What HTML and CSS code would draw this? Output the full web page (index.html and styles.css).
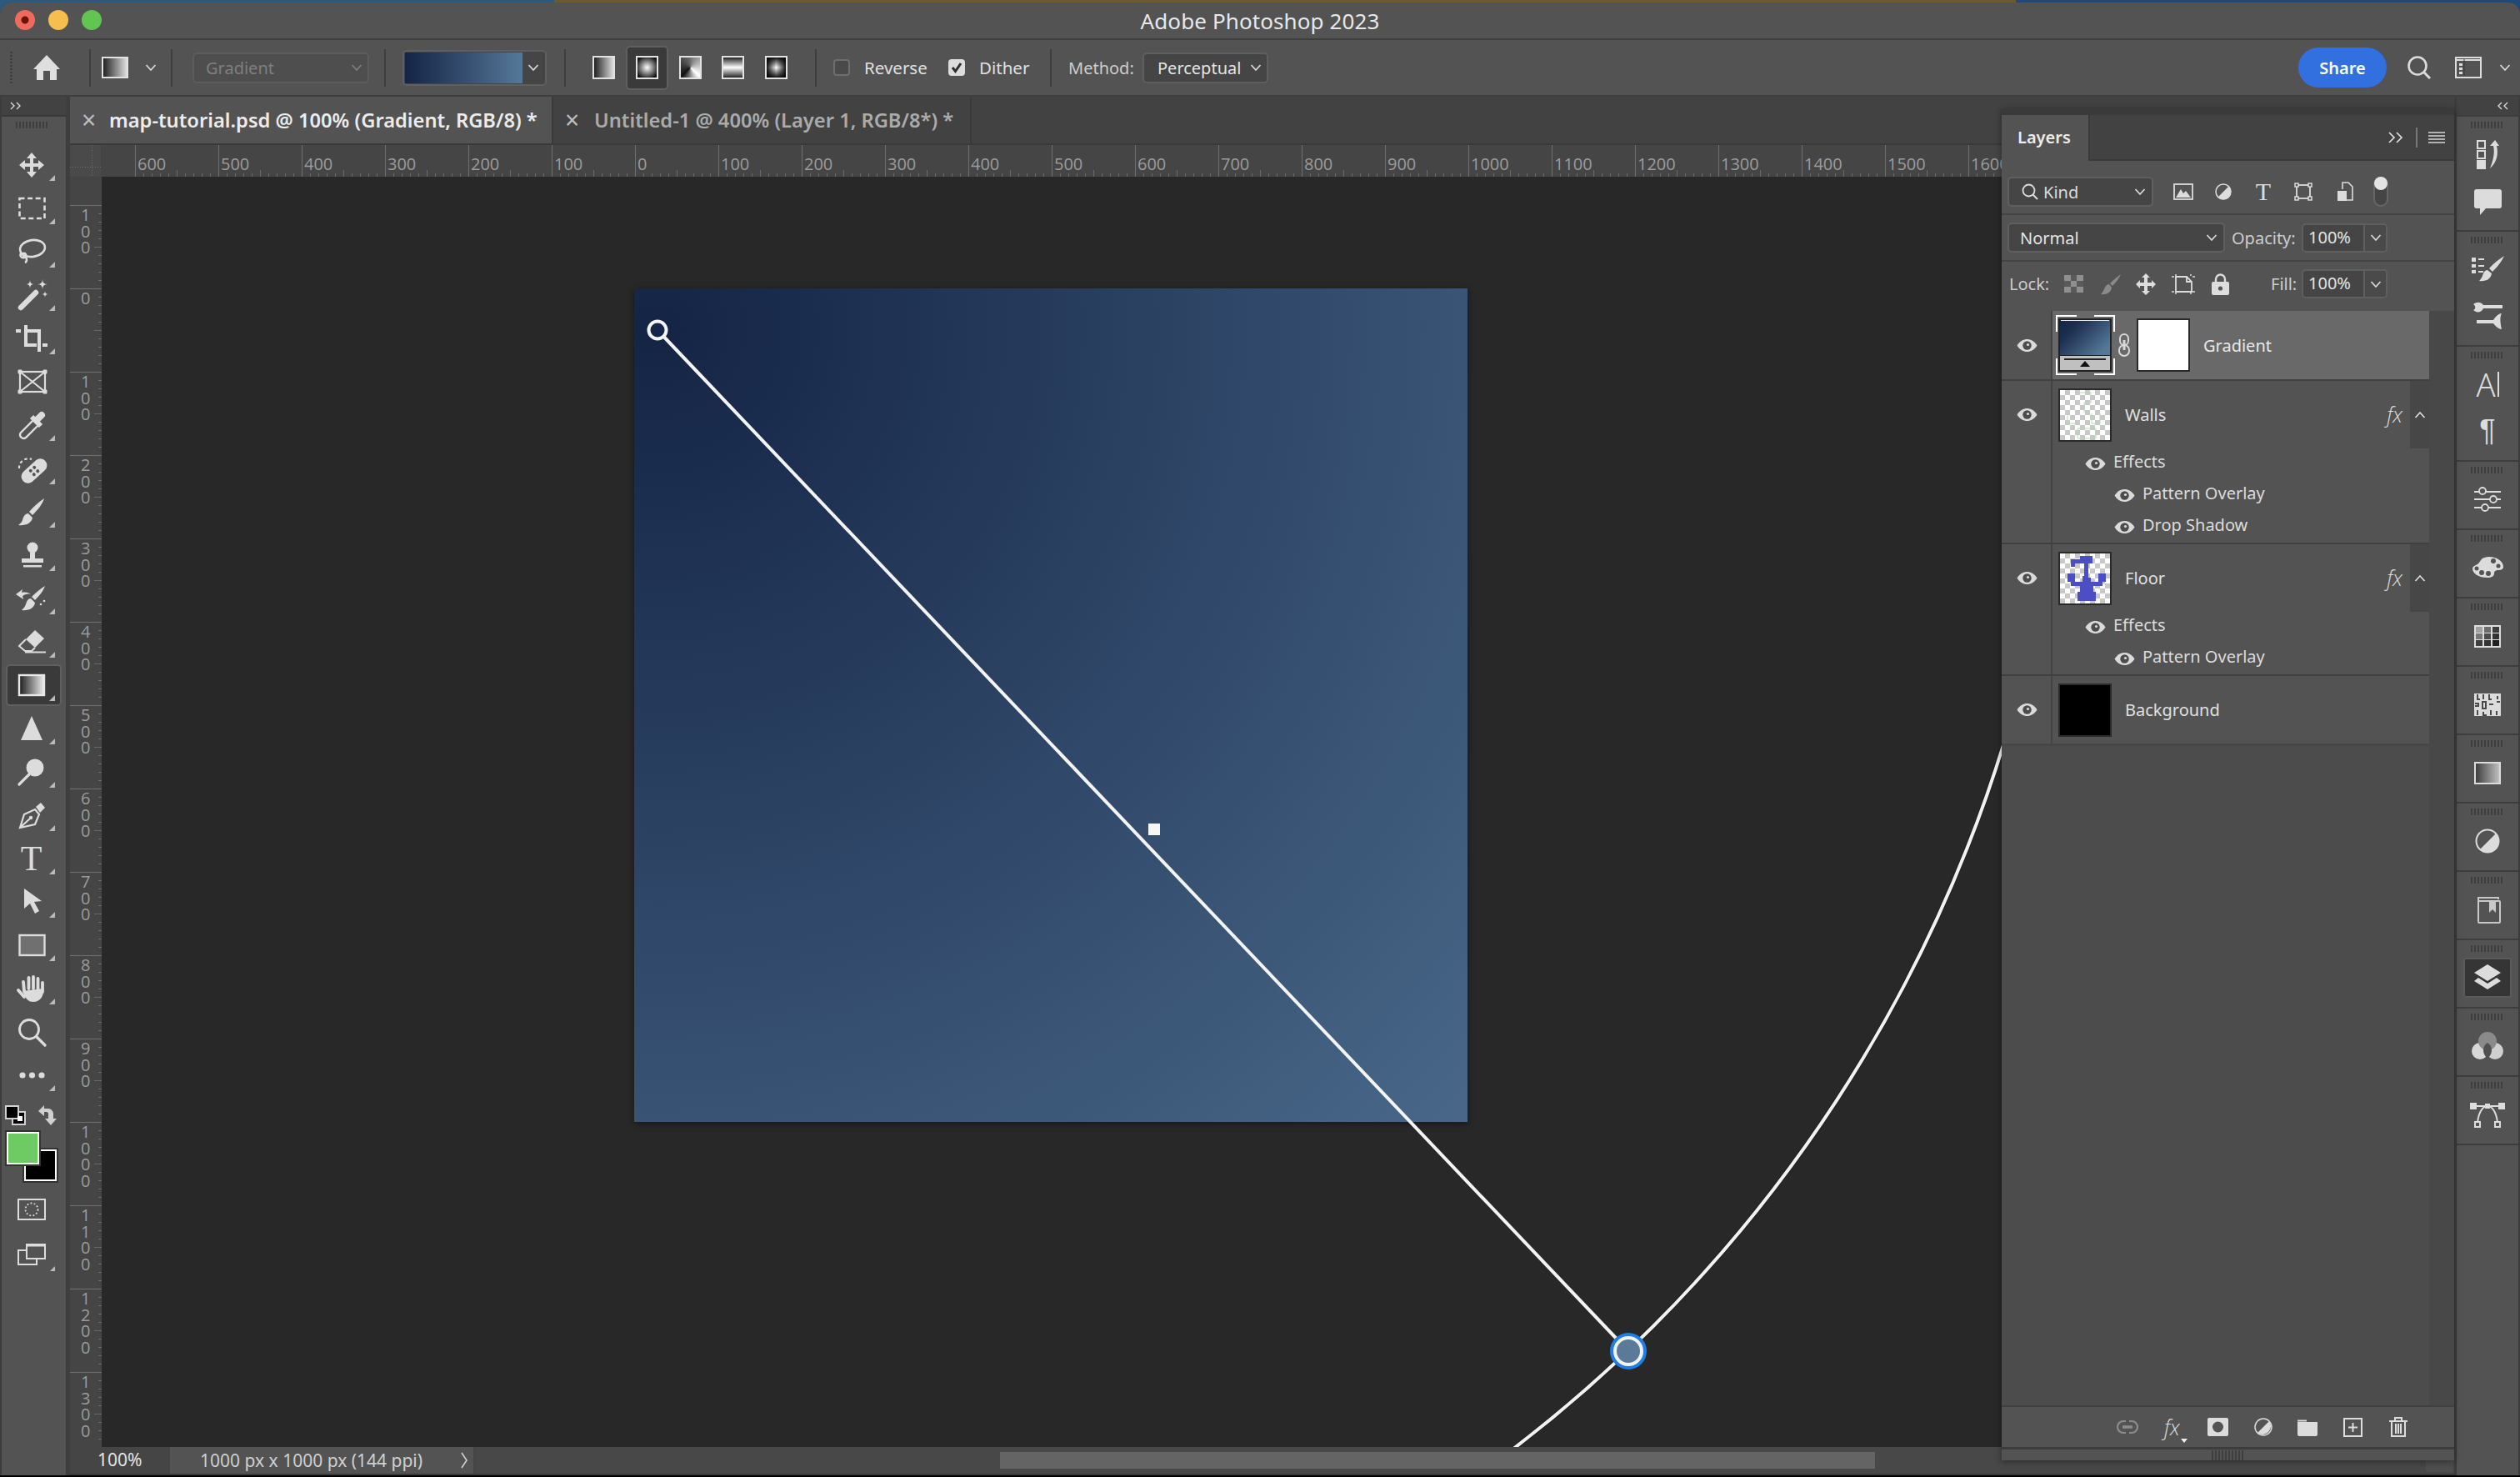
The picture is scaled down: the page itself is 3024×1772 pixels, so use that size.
FILE: index.html
```html
<!DOCTYPE html>
<html lang="en">
<head>
<meta charset="utf-8">
<title>Adobe Photoshop 2023</title>
<link rel="stylesheet" href="styles.css">
</head>
<body>
<svg class="defs" width="0" height="0" aria-hidden="true">
  <defs>
    <linearGradient id="gBW"><stop offset="0" stop-color="#1c1c1c"/><stop offset="1" stop-color="#eeeeee"/></linearGradient>
    <linearGradient id="gGrey"><stop offset="0" stop-color="#3a3a3a"/><stop offset="1" stop-color="#c4c4c4"/></linearGradient>
    <linearGradient id="gThumb" x1="0" y1="0" x2="1" y2="0.7"><stop offset="0" stop-color="#142445"/><stop offset="0.3" stop-color="#1d3050"/><stop offset="1" stop-color="#557899"/></linearGradient>
    <symbol id="eye" viewBox="0 0 25 17"><path fill="#dadada" d="M.5 8.5C4 3 8 1 12.5 1S21 3 24.5 8.5C21 14 17 16 12.5 16S4 14 .5 8.5Z"/><circle cx="12.5" cy="8.5" r="5.2" fill="#4c4c4c"/><circle cx="13.5" cy="7.5" r="1.6" fill="#dadada"/></symbol>
    <symbol id="chev" viewBox="0 0 14 10"><path d="M1.5 2 7 8l5.5-6" fill="none" stroke="#d8d8d8" stroke-width="1.8"/></symbol>
    <symbol id="caret" viewBox="0 0 14 10"><path d="M1.5 8 7 2l5.5 6" fill="none" stroke="#d8d8d8" stroke-width="1.8"/></symbol>
  </defs>
</svg>
<div class="window">
  <header class="titlebar">
    <div class="lights"><i class="light red"></i><i class="light yellow"></i><i class="light green"></i></div>
    <div class="apptitle">Adobe Photoshop 2023</div>
  </header>

  <div class="options">
    <i class="opt-grip"></i>
    <svg class="opt-home" width="32" height="30" viewBox="0 0 32 30"><path fill="#dedede" d="M16 0 32 17h-4v13h-8V19h-8v11H4V17H0Z"/></svg>
    <i class="sep sep-a"></i>
    <span class="swatch-tool gt gt-linear"></span>
    <svg class="chev-a" width="14" height="10"><use href="#chev"/></svg>
    <i class="sep sep-b"></i>
    <div class="select select-disabled"><span>Gradient</span><svg width="14" height="10"><use href="#chev" opacity=".35"/></svg></div>
    <i class="sep sep-c"></i>
    <div class="picker"><span class="picker-grad"></span><span class="picker-arrow"><svg width="14" height="10"><use href="#chev"/></svg></span></div>
    <i class="sep sep-d"></i>
    <span class="gt gt-linear gt-first"></span>
    <span class="gt-selected"><span class="gt gt-radial"></span></span>
    <span class="gt gt-angle gt-third"></span>
    <span class="gt gt-reflected gt-next"></span>
    <span class="gt gt-diamond gt-next"></span>
    <i class="sep sep-e"></i>
    <span class="check check-rev"></span>
    <span class="optlabel lbl-rev">Reverse</span>
    <span class="check check-on check-dit"><svg width="14" height="14" viewBox="0 0 14 14"><path d="M2 7l3.5 4.5L12 2" fill="none" stroke="#2e2e2e" stroke-width="3"/></svg></span>
    <span class="optlabel lbl-dit">Dither</span>
    <i class="sep sep-f"></i>
    <span class="optlabel lbl-met">Method:</span>
    <div class="select select-method"><span>Perceptual</span><svg width="14" height="10"><use href="#chev"/></svg></div>
    <button class="share">Share</button>
    <svg class="opt-search" width="28" height="28" viewBox="0 0 28 28"><circle cx="12" cy="12" r="10.5" fill="none" stroke="#dcdcdc" stroke-width="2.6"/><path d="M19.5 19.5 27 27" stroke="#dcdcdc" stroke-width="3"/></svg>
    <svg class="opt-work" width="32" height="26" viewBox="0 0 32 26"><rect x="1" y="1" width="30" height="24" fill="none" stroke="#dcdcdc" stroke-width="2"/><path d="M1 4h30" stroke="#dcdcdc" stroke-width="2"/><path d="M11 3v20" stroke="#3c3c3c" stroke-width="1"/><rect x="5" y="8" width="4" height="3" fill="#dcdcdc"/><rect x="5" y="13" width="4" height="3" fill="#dcdcdc"/><rect x="5" y="18" width="4" height="3" fill="#dcdcdc"/></svg>
    <svg class="opt-chev" width="14" height="10"><use href="#chev"/></svg>
  </div>

  <div class="work">
    <aside class="toolbar">
      <div class="collapse-strip"><svg width="14" height="10" viewBox="0 0 14 10"><path d="M1 1l4 4-4 4M8 1l4 4-4 4" fill="none" stroke="#d8d8d8" stroke-width="1.4"/></svg></div>
      <i class="grip grip-tools"></i>
      <div class="tools">
        <div class="tool more"><svg viewBox="0 0 48 48"><path d="M24 9l-6 7h4v6h-6v-4l-7 6 7 6v-4h6v6h-4l6 7 6-7h-4v-6h6v4l7-6-7-6v4h-6v-6h4z"/></svg></div>
        <div class="tool more"><svg viewBox="0 0 48 48"><rect x="9.5" y="12" width="30" height="24" fill="none" stroke="#dcdcdc" stroke-width="2.6" stroke-dasharray="6 3.6"/></svg></div>
        <div class="tool more"><svg viewBox="0 0 48 48"><g fill="none" stroke="#dcdcdc" stroke-width="2.6"><ellipse cx="25" cy="20" rx="15" ry="10" transform="rotate(-8 25 20)"/><path d="M12 25c-3 3-1 7 3 6 4-1 2-6-1-5-2 1 1 4 3 5 2 2 1 5-1 6"/></g></svg></div>
        <div class="tool more"><svg viewBox="0 0 48 48"><path d="M11 39 29 21" stroke="#dcdcdc" stroke-width="6.5" stroke-linecap="round"/><path d="M23 6q0 5 5 5-5 0-5 5 0-5-5-5 5 0 5-5ZM38 5q0 6 6 6-6 0-6 6 0-6-6-6 6 0 6-6ZM41 19q0 4 4 4-4 0-4 4 0-4-4-4 4 0 4-4Z" transform="translate(-1 0)"/></svg></div>
        <div class="tool more"><svg viewBox="0 0 48 48"><path d="M17 8v24h13M17 15h16v25M5 15h6M37 32h6" fill="none" stroke="#dcdcdc" stroke-width="4"/></svg></div>
        <div class="tool"><svg viewBox="0 0 48 48"><g fill="none" stroke="#dcdcdc" stroke-width="2.2"><rect x="10" y="12" width="30" height="24"/><path d="M10 12l30 24M40 12 10 36"/></g><path d="M8 10h4v4H8zM38 10h4v4h-4zM8 34h4v4H8zM38 34h4v4h-4z" stroke="#dcdcdc"/></svg></div>
        <div class="tool more"><svg viewBox="0 0 48 48"><path d="M11 33 26 18l6 6-15 15c-4 3-9-2-6-6Z" fill="none" stroke="#dcdcdc" stroke-width="2.4"/><path d="M24 14l11 11" stroke="#dcdcdc" stroke-width="6"/><path d="M30 18l6-6" stroke="#dcdcdc" stroke-width="8" stroke-linecap="round"/></svg></div>
        <div class="tool more"><svg viewBox="0 0 48 48"><path d="M9 24a11 11 0 0 1 15-11" fill="none" stroke="#dcdcdc" stroke-width="2.2" stroke-dasharray="3.5 3"/><g transform="rotate(-42 27 27)"><rect x="9" y="19" width="36" height="16" rx="8"/><g fill="#535353"><circle cx="24" cy="24" r="2"/><circle cx="30" cy="24" r="2"/><circle cx="24" cy="30" r="2"/><circle cx="30" cy="30" r="2"/></g></g></svg></div>
        <div class="tool more"><svg viewBox="0 0 48 48"><path d="M39 8C37 15 31 22 25 28l-4-4C26 18 33 12 39 8ZM20 26c-4 0-6 4-7 8-1 3-3 4-5 6 8 1 16-2 17-9Z"/></svg></div>
        <div class="tool more"><svg viewBox="0 0 48 48"><circle cx="25" cy="15" r="6.5"/><path d="M22 20h6v8h-6zM12 28h26v5H12zM14 36h22v2.4H14z"/></svg></div>
        <div class="tool more"><svg viewBox="0 0 48 48"><path d="M40 9C38 15 33 21 28 26l-4-4C29 17 35 12 40 9ZM23 24c-4 0-5 4-6 7-1 3-3 5-5 7 8 1 15-2 16-9Z"/><path d="M5 19l8-6-1 4c5-1 9 0 11 2-4-1-7 0-10 2l1 4Z"/><circle cx="35" cy="31" r="1.3"/><circle cx="39" cy="27" r="1.3"/></svg></div>
        <div class="tool more"><svg viewBox="0 0 48 48"><path d="M28 10 39 20 28 31 17 21Z"/><path d="M17 21 9 29l7 6h8l4-4" fill="none" stroke="#dcdcdc" stroke-width="2"/><path d="M16 36.500h25" stroke="#dcdcdc" stroke-width="2"/></svg></div>
        <div class="tool more tool-active"><svg viewBox="0 0 48 48"><rect x="9" y="12" width="30" height="24" fill="url(#gBW)" stroke="#e8e8e8" stroke-width="2.4"/></svg></div>
        <div class="tool more"><svg viewBox="0 0 48 48"><path d="M24 9 37 38H11Z"/></svg></div>
        <div class="tool more"><svg viewBox="0 0 48 48"><circle cx="28" cy="19" r="10.500"/><path d="M9 39 21 27" stroke="#dcdcdc" stroke-width="3.200" stroke-linecap="round"/></svg></div>
        <div class="tool more"><svg viewBox="0 0 48 48"><path d="M10 39 15 23 28 17 33 23 28 35Z M10 39 22 28" fill="none" stroke="#dcdcdc" stroke-width="2.2"/><circle cx="23" cy="27" r="2.200"/><path d="M29 14 35 9 40 15 34 21Z"/></svg></div>
        <div class="tool more"><span class="tool-t">T</span></div>
        <div class="tool more"><svg viewBox="0 0 48 48"><path d="M15 8v24l7-6 6 12 5-3-6-11 9-1Z"/></svg></div>
        <div class="tool more"><svg viewBox="0 0 48 48"><rect x="9.500" y="12" width="30" height="24" fill="#707070" stroke="#dcdcdc" stroke-width="2.400"/></svg></div>
        <div class="tool more"><svg viewBox="0 0 48 48"><path d="M8 26l7 8M15 27l-1-11M20.500 24V11M26 24V10M31.500 25V12M37 28V17" stroke="#dcdcdc" stroke-width="3.800" stroke-linecap="round"/><path d="M13 27 38 24c1 9-4 16-12 16-6 0-9-3-13-13Z"/></svg></div>
        <div class="tool"><svg viewBox="0 0 48 48"><circle cx="21" cy="21" r="11.500" fill="none" stroke="#dcdcdc" stroke-width="2.800"/><path d="M29.500 29.500 40 40" stroke="#dcdcdc" stroke-width="3.400" stroke-linecap="round"/></svg></div>
        <div class="tool more"><svg viewBox="0 0 48 48"><circle cx="13" cy="24" r="3.600"/><circle cx="24.500" cy="24" r="3.600"/><circle cx="36" cy="24" r="3.600"/></svg></div>
      </div>
      <div class="colors">
        <svg class="color-default" width="25" height="24" viewBox="0 0 25 24"><rect x="9" y="8" width="15" height="15" fill="#000" stroke="#d0d0d0" stroke-width="2"/><rect x="1" y="1" width="15" height="15" fill="#000" stroke="#d0d0d0" stroke-width="2"/><rect x="15" y="13" width="6" height="6" fill="#fff"/></svg>
        <svg class="color-swap" width="24" height="24" viewBox="0 0 24 24"><path d="M0 7l7-7v4h5c3 0 6 3 6 6v6h4l-7 8-7-8h4v-6c0-1-1-2-2-2H7v5Z" fill="#d0d0d0"/></svg>
        <span class="color-bg"></span>
        <span class="color-fg"></span>
      </div>
      <svg class="quickmask" width="34" height="26" viewBox="0 0 34 26"><rect x="1" y="1" width="32" height="24" fill="none" stroke="#dcdcdc" stroke-width="2"/><circle cx="17" cy="13" r="7.500" fill="none" stroke="#dcdcdc" stroke-width="1.800" stroke-dasharray="1.800 2.400"/></svg>
      <div class="tool-screen"><svg width="34" height="26" viewBox="0 0 34 26"><rect x="1" y="8" width="22" height="17" fill="none" stroke="#dcdcdc" stroke-width="2"/><rect x="11" y="1" width="22" height="17" fill="#535353" stroke="#dcdcdc" stroke-width="2"/><path d="M11 2h22" stroke="#dcdcdc" stroke-width="3"/></svg></div>
    </aside>

    <main class="doc">
      <nav class="tabs">
        <div class="tab tab-active"><span class="tab-x">×</span><span class="tab-name">map-tutorial.psd @ 100% (Gradient, RGB/8) *</span></div>
        <div class="tab tab-idle"><span class="tab-x">×</span><span class="tab-name">Untitled-1 @ 400% (Layer 1, RGB/8*) *</span></div>
      </nav>
      <div class="hruler-row">
        <div class="ruler-corner"></div>
        <div class="hruler">
          <span>600</span><span>500</span><span>400</span><span>300</span><span>200</span><span>100</span><span>0</span><span>100</span><span>200</span><span>300</span><span>400</span><span>500</span><span>600</span><span>700</span><span>800</span><span>900</span><span>1000</span><span>1100</span><span>1200</span><span>1300</span><span>1400</span><span>1500</span><span>1600</span>
        </div>
      </div>
      <div class="doc-body">
        <div class="vruler">
          <div><span>100</span></div><div><span>0</span></div><div><span>100</span></div><div><span>200</span></div><div><span>300</span></div><div><span>400</span></div><div><span>500</span></div><div><span>600</span></div><div><span>700</span></div><div><span>800</span></div><div><span>900</span></div><div><span>1000</span></div><div><span>1100</span></div><div><span>1200</span></div><div><span>1300</span></div>
        </div>
        <div class="pasteboard">
          <div class="artboard"></div>
          <svg class="gizmo" width="2823" height="1524" viewBox="0 0 2823 1524">
            <g fill="none">
              <circle cx="667" cy="184" r="1690" stroke="#1a1a1a" stroke-opacity=".5" stroke-width="6"/>
              <circle cx="667" cy="184" r="1690" stroke="#f2f2f2" stroke-width="4"/>
              <path d="M667 184 1832 1409" stroke="#f4f4f4" stroke-width="4"/>
            </g>
            <circle cx="667" cy="184" r="10.500" fill="#15264a" stroke="#f4f4f4" stroke-width="4"/>
            <rect x="1256" y="776" width="14" height="14" fill="#f6f6f6"/>
            <circle cx="1832" cy="1409" r="22" fill="#1f7fe6"/>
            <circle cx="1832" cy="1409" r="16" fill="#5b7a97" stroke="#f2f2f2" stroke-width="4"/>
          </svg>
        </div>
      </div>
      <footer class="status">
        <div class="status-zoom">100%</div>
        <div class="status-info"><span>1000 px x 1000 px (144 ppi)</span><svg width="10" height="20" viewBox="0 0 10 20"><path d="M2 1l6 9-6 9" fill="none" stroke="#d0d0d0" stroke-width="1.600"/></svg></div>
        <div class="status-track"><span class="status-thumb"></span><span class="status-end"></span></div>
      </footer>
    </main>

    <aside class="dock">
      <div class="collapse-strip dock-strip"><svg width="14" height="10" viewBox="0 0 14 10"><path d="M5 1 1 5l4 4M12 1 8 5l4 4" fill="none" stroke="#d8d8d8" stroke-width="1.400"/></svg></div>
      <section class="dock-sec">
        <i class="grip"></i>
        <div class="dock-icon"><svg viewBox="0 0 48 48"><rect x="12" y="8" width="9" height="9" fill="none" stroke="#dcdcdc" stroke-width="2"/><rect x="12" y="20" width="9" height="9" fill="none" stroke="#dcdcdc" stroke-width="2"/><rect x="11" y="31" width="11" height="11"/><path d="M27 14 33 7 38 14H35C37 23 36 33 27 41 31 31 33 22 31 14Z"/></svg></div>
        <div class="dock-icon"><svg viewBox="0 0 48 48"><path d="M11 10h27a3 3 0 0 1 3 3v17a3 3 0 0 1-3 3H22l-7 8v-8h-4a3 3 0 0 1-3-3V13a3 3 0 0 1 3-3Z"/></svg></div>
      </section>
      <section class="dock-sec">
        <i class="grip"></i>
        <div class="dock-icon"><svg viewBox="0 0 48 48"><path d="M5 10h5v5H5zM5 18h5v4H5zM5 25h5v4H5zM13 11h7v2h-7zM13 19h7v2h-7zM13 26h6v2h-6z"/><path d="M44 8c-3 7-9 14-14 19l-4-4c5-6 12-11 18-15ZM24 25c-4 0-5 4-6 7-1 2-2 4-4 6 8 1 14-2 15-9Z"/></svg></div>
        <div class="dock-icon"><svg viewBox="0 0 48 48"><path d="M7 10c4-3 9-3 12 1h23v4H19c-2 5-8 6-12 2 3-1 3-5 0-7ZM41 40c-3 0-7-3-10-7H11v-4h20c3-5 7-8 10-8-3 5-1 14 0 19Z"/></svg></div>
      </section>
      <section class="dock-sec">
        <i class="grip"></i>
        <div class="dock-icon dock-text"><span class="dock-a">A</span><i class="dock-caret"></i></div>
        <div class="dock-icon dock-text"><span class="dock-p">¶</span></div>
      </section>
      <section class="dock-sec dock-one"><i class="grip"></i><div class="dock-icon"><svg viewBox="0 0 48 48"><g fill="none" stroke="#dcdcdc" stroke-width="1.800"><path d="M8 15h32M8 24h32M8 34h32"/><g fill="#535353"><circle cx="18" cy="14" r="4"/><circle cx="31" cy="24" r="4"/><circle cx="21" cy="34" r="4"/></g></g></svg></div></section>
      <section class="dock-sec dock-one"><i class="grip"></i><div class="dock-icon"><svg viewBox="0 0 48 48"><path d="M26 11c9 0 17 5 17 12 0 3-3 4-6 4-3 0-5 1-5 4 0 3-3 5-8 5C13 36 6 31 6 25c0-2 2-3 4-4 3-1 4-3 6-6 2-3 6-4 10-4Z"/><g fill="#535353"><circle cx="31" cy="16" r="3"/><circle cx="37" cy="22" r="2.500"/><circle cx="25" cy="31" r="3"/><circle cx="17" cy="30" r="3"/><circle cx="11" cy="25" r="2.500"/></g></svg></div></section>
      <section class="dock-sec dock-one"><i class="grip"></i><div class="dock-icon"><svg viewBox="0 0 48 48"><rect x="8" y="11" width="32" height="27" fill="#dcdcdc"/><g><rect x="10" y="13" width="8" height="7" fill="#a0a0a0"/><rect x="20" y="13" width="8" height="7" fill="#6c6c6c"/><rect x="30" y="13" width="8" height="7" fill="#3c3c3c"/><rect x="10" y="21" width="8" height="7" fill="#777"/><rect x="20" y="21" width="8" height="7" fill="#4c4c4c"/><rect x="30" y="21" width="8" height="7" fill="#333"/><rect x="10" y="29" width="8" height="7" fill="#3e3e3e"/><rect x="20" y="29" width="8" height="7" fill="#333"/><rect x="30" y="29" width="8" height="7" fill="#222"/></g></svg></div></section>
      <section class="dock-sec dock-one"><i class="grip"></i><div class="dock-icon"><svg viewBox="0 0 48 48"><rect x="8" y="11" width="32" height="27" fill="#dcdcdc"/><path d="M12 12v6h3M19 12v6M26 12v6h3M36 14v4M9 23h4v3H9M18 21h4v8h-4zM26 24h5M35 21h4M12 31v6M19 33v4h4M28 31v6M35 32v5" fill="none" stroke="#4a4a4a" stroke-width="2"/></svg></div></section>
      <section class="dock-sec dock-one"><i class="grip"></i><div class="dock-icon"><svg viewBox="0 0 48 48"><rect x="9" y="12" width="30" height="25" fill="url(#gGrey)" stroke="#dcdcdc" stroke-width="2"/></svg></div></section>
      <section class="dock-sec dock-one"><i class="grip"></i><div class="dock-icon"><svg viewBox="0 0 48 48"><circle cx="24" cy="24" r="13.500" fill="#535353" stroke="#dcdcdc" stroke-width="2"/><path d="M34 15A13 13 0 0 1 15 34Z"/></svg></div></section>
      <section class="dock-sec dock-one"><i class="grip"></i><div class="dock-icon"><svg viewBox="0 0 48 48"><path d="M13 33V10h24v2" fill="none" stroke="#c8c8c8" stroke-width="2"/><rect x="13" y="14" width="26" height="26" rx="1" fill="#535353" stroke="#c8c8c8" stroke-width="2"/><path d="M26 13h8v15l-4-4-4 4Z" fill="#c8c8c8"/></svg></div></section>
      <section class="dock-sec dock-one"><i class="grip"></i><div class="dock-icon dock-active"><svg viewBox="0 0 48 48"><path d="M24 8 40 18 24 28 8 18Z"/><path d="M13 24 8 28 24 38 40 28 35 24 24 31Z"/></svg></div></section>
      <section class="dock-sec dock-one"><i class="grip"></i><div class="dock-icon"><svg viewBox="0 0 48 48"><circle cx="15" cy="30" r="10" fill="#d8d8d8"/><circle cx="33" cy="30" r="10" fill="#d0d0d0"/><circle cx="24" cy="18" r="11" fill="#8a8a8a"/><path d="M24 20a11 11 0 0 1 5 9c0 4-2 7-5 10-3-3-5-6-5-10a11 11 0 0 1 5-9Z" fill="#505050"/></svg></div></section>
      <section class="dock-sec dock-one"><i class="grip"></i><div class="dock-icon"><svg viewBox="0 0 48 48"><path d="M12 37C12 25 17 14 24 14S36 25 36 37M8 14h32" fill="none" stroke="#dcdcdc" stroke-width="2"/><path d="M3 10h8v8H3zM37 10h8v8h-8zM21 11h6v6h-6z"/><rect x="9" y="33" width="6" height="6" fill="#535353" stroke="#dcdcdc" stroke-width="2"/><rect x="33" y="33" width="6" height="6" fill="#535353" stroke="#dcdcdc" stroke-width="2"/></svg></div></section>
      <section class="dock-sec dock-rest"></section>
    </aside>

    <section class="panel">
      <div class="panel-head">
        <div class="panel-tab">Layers</div>
        <svg class="ph-more" width="18" height="14" viewBox="0 0 18 14"><path d="M1 1l6 6-6 6M10 1l6 6-6 6" fill="none" stroke="#e0e0e0" stroke-width="1.700"/></svg>
        <i class="ph-sep"></i>
        <svg class="ph-menu" width="20" height="14" viewBox="0 0 20 14"><path d="M0 1h20M0 5h20M0 9h20M0 13h20" stroke="#d8d8d8" stroke-width="1.500"/></svg>
      </div>

      <div class="filter-row prow">
        <div class="select select-kind">
          <svg width="20" height="20" viewBox="0 0 20 20"><circle cx="8.500" cy="8.500" r="7" fill="none" stroke="#dcdcdc" stroke-width="1.800"/><path d="M13.500 13.500 19 19" stroke="#dcdcdc" stroke-width="2"/></svg>
          <span>Kind</span><svg class="sel-chev" width="14" height="10"><use href="#chev"/></svg>
        </div>
        <svg class="f-img" width="24" height="20" viewBox="0 0 24 20"><rect x="1" y="1" width="22" height="18" fill="none" stroke="#dcdcdc" stroke-width="1.800"/><path d="M3 17l6-10 3 5 3-3 6 8Z" fill="#dcdcdc"/></svg>
        <svg class="f-adj" width="20" height="20" viewBox="0 0 20 20"><circle cx="10" cy="10" r="9" fill="none" stroke="#dcdcdc" stroke-width="1.500"/><path d="M16.500 3.500A9 9 0 0 1 3.500 16.500Z" fill="#dcdcdc"/></svg>
        <span class="f-t">T</span>
        <svg class="f-shape" width="22" height="22" viewBox="0 0 22 22"><rect x="3" y="3" width="16" height="16" fill="none" stroke="#dcdcdc" stroke-width="1.800"/><g fill="#535353" stroke="#dcdcdc" stroke-width="1.500"><rect x="1" y="1" width="4" height="4"/><rect x="17" y="1" width="4" height="4"/><rect x="1" y="17" width="4" height="4"/><rect x="17" y="17" width="4" height="4"/></g></svg>
        <svg class="f-smart" width="20" height="24" viewBox="0 0 20 24"><path d="M7 9V1h7l5 5v16h-7" fill="none" stroke="#dcdcdc" stroke-width="1.600"/><rect x="1" y="11" width="11" height="12" fill="#dcdcdc"/></svg>
        <span class="f-toggle"><i></i></span>
      </div>

      <div class="blend-row prow">
        <div class="select select-blend"><span>Normal</span><svg width="14" height="10"><use href="#chev"/></svg></div>
        <span class="plabel p-opacity">Opacity:</span>
        <div class="pct"><span>100%</span><b><svg width="14" height="10"><use href="#chev"/></svg></b></div>
      </div>

      <div class="lock-row prow">
        <span class="plabel p-lock">Lock:</span>
        <svg class="l-check" width="23" height="21" viewBox="0 0 23 21"><rect width="23" height="21" fill="#8f8f8f"/><path d="M8 0h7v7H8zM0 7h8v7H0zM15 7h8v7h-8zM8 14h7v7H8z" fill="#5a5a5a"/></svg>
        <svg class="l-brush" width="25" height="26" viewBox="0 0 25 26"><path d="M24 1c-2 5-6 10-10 14l-3-3c4-4 9-8 13-11ZM10 13c-3 0-5 3-6 6-1 2-2 4-4 6 7 1 12-2 13-8Z" fill="#8a8a8a"/></svg>
        <svg class="l-move" width="24" height="26" viewBox="0 0 24 26"><path d="M12 0 7 5h3v6H5V8l-5 5 5 5v-3h5v6H7l5 5 5-5h-3v-6h5v3l5-5-5-5v3h-5V5h3Z" fill="#dcdcdc"/></svg>
        <svg class="l-art" width="28" height="24" viewBox="0 0 28 24"><path d="M5 3h13l6 6v12H5Z" fill="none" stroke="#dcdcdc" stroke-width="1.800"/><path d="M18 3v6h6" fill="none" stroke="#dcdcdc" stroke-width="1.800"/><path d="M0 3h3M25 3h3M0 21h3M25 21h3M5 0v2M5 22v2M23 0v2M23 22v2" stroke="#dcdcdc" stroke-width="1.500"/></svg>
        <svg class="l-lock" width="21" height="26" viewBox="0 0 21 26"><path d="M5 11V7a5.500 5.500 0 0 1 11 0v4" fill="none" stroke="#dcdcdc" stroke-width="2.400"/><rect y="10" width="21" height="16" rx="2" fill="#dcdcdc"/><circle cx="10.500" cy="18" r="2.600" fill="#535353"/></svg>
        <span class="plabel p-fill">Fill:</span>
        <div class="pct"><span>100%</span><b><svg width="14" height="10"><use href="#chev"/></svg></b></div>
      </div>

      <div class="panel-main">
        <div class="layers">
          <div class="layer layer-selected">
            <div class="eye-col"><svg class="eye" width="25" height="17"><use href="#eye"/></svg></div>
            <div class="layer-content">
              <div class="layer-head layer-head-sel">
                <svg class="thumb-grad" width="71" height="72" viewBox="0 0 71 72">
                  <rect x="3" y="4" width="64" height="64" fill="#222"/>
                  <rect x="5" y="6" width="60" height="42" fill="url(#gThumb)"/>
                  <path d="M6 6.500h58" stroke="#e6e6e6" stroke-width="1"/>
                  <rect x="5" y="49" width="60" height="17" fill="#c0c0c0"/>
                  <path d="M10 53h50" stroke="#222" stroke-width="2"/>
                  <path d="M35 55l6 7H29Z" fill="#111"/>
                  <path d="M1 20V1h24M46 1h24v19M1 52v19h24M46 71h24V52" fill="none" stroke="#fff" stroke-width="2"/>
                </svg>
                <svg class="chain" width="14" height="28" viewBox="0 0 14 28"><g fill="none" stroke="#d8d8d8" stroke-width="2"><rect x="2" y="1" width="10" height="13" rx="5"/><rect x="1" y="14" width="12" height="13" rx="6"/></g><path d="M7 8v12" stroke="#d8d8d8" stroke-width="3"/></svg>
                <span class="thumb thumb-mask"></span>
                <span class="lname lname-sel">Gradient</span>
              </div>
            </div>
          </div>

          <div class="layer">
            <div class="eye-col eye-col-group"><svg class="eye" width="25" height="17"><use href="#eye"/></svg></div>
            <div class="layer-content">
              <div class="layer-head">
                <span class="thumb thumb-check"><svg width="60" height="60" viewBox="0 0 60 60"><path d="M22 3h15v12H29v12M9 28v12h12M38 28v12H48V28M21 46h22v12H21z" fill="none" stroke="#b4d8b4" stroke-width="1"/></svg></span>
                <span class="lname">Walls</span>
                <span class="fx">fx</span>
                <span class="collapse"><svg width="14" height="10"><use href="#caret"/></svg></span>
              </div>
              <div class="fx-list">
                <div class="fx-row fx-group"><svg class="eye" width="25" height="17"><use href="#eye"/></svg><span>Effects</span></div>
                <div class="fx-row fx-item"><svg class="eye" width="25" height="17"><use href="#eye"/></svg><span>Pattern Overlay</span></div>
                <div class="fx-row fx-item"><svg class="eye" width="25" height="17"><use href="#eye"/></svg><span>Drop Shadow</span></div>
              </div>
            </div>
          </div>

          <div class="layer">
            <div class="eye-col eye-col-group"><svg class="eye" width="25" height="17"><use href="#eye"/></svg></div>
            <div class="layer-content">
              <div class="layer-head">
                <span class="thumb thumb-check"><svg width="60" height="60" viewBox="0 0 60 60"><g fill="#4c4ec6"><path d="M13 7h11V3h15v9h-5v17h3v5h9V24h9v10h-4v5H40v7h3v11H21V46h3v-7H13v-5h14v-7h2V12H18v4h-5Z"/><path d="M9 24h9v10H9z"/></g></svg></span>
                <span class="lname">Floor</span>
                <span class="fx">fx</span>
                <span class="collapse"><svg width="14" height="10"><use href="#caret"/></svg></span>
              </div>
              <div class="fx-list">
                <div class="fx-row fx-group"><svg class="eye" width="25" height="17"><use href="#eye"/></svg><span>Effects</span></div>
                <div class="fx-row fx-item"><svg class="eye" width="25" height="17"><use href="#eye"/></svg><span>Pattern Overlay</span></div>
              </div>
            </div>
          </div>

          <div class="layer layer-last">
            <div class="eye-col"><svg class="eye" width="25" height="17"><use href="#eye"/></svg></div>
            <div class="layer-content">
              <div class="layer-head">
                <span class="thumb thumb-black"></span>
                <span class="lname">Background</span>
              </div>
            </div>
          </div>
        </div>
        <div class="panel-scroll"></div>
      </div>

      <div class="panel-foot">
        <svg class="pf-link" width="28" height="18" viewBox="0 0 28 18"><g fill="none" stroke="#8c8c8c" stroke-width="2.200"><path d="M12 2H9a7 7 0 0 0 0 14h3M16 2h3a7 7 0 0 1 0 14h-3"/></g><path d="M8 9h12" stroke="#8c8c8c" stroke-width="3.500"/></svg>
        <span class="pf-fx">fx</span>
        <svg class="pf-mask" width="25" height="22" viewBox="0 0 25 22"><rect width="25" height="22" rx="2" fill="#dcdcdc"/><ellipse cx="12.500" cy="11" rx="6.500" ry="6.500" fill="#535353"/></svg>
        <svg class="pf-adj" width="22" height="22" viewBox="0 0 22 22"><circle cx="11" cy="11" r="10" fill="none" stroke="#dcdcdc" stroke-width="1.500"/><path d="M18 4A10 10 0 0 1 4 18Z" fill="#dcdcdc"/></svg>
        <svg class="pf-folder" width="24" height="21" viewBox="0 0 24 21"><path d="M0 4h24v15a2 2 0 0 1-2 2H2a2 2 0 0 1-2-2Z" fill="#dcdcdc"/><path d="M0 2.500h11" stroke="#dcdcdc" stroke-width="2"/></svg>
        <svg class="pf-new" width="23" height="23" viewBox="0 0 23 23"><rect x="1" y="1" width="21" height="21" fill="none" stroke="#dcdcdc" stroke-width="2"/><path d="M11.500 6v11M6 11.500h11" stroke="#dcdcdc" stroke-width="2"/></svg>
        <svg class="pf-trash" width="22" height="24" viewBox="0 0 22 24"><path d="M0 5h22M7 5V1h8v4" fill="none" stroke="#dcdcdc" stroke-width="2"/><path d="M3 5v18h16V5M8 8v12M11 8v12M14 8v12" fill="none" stroke="#dcdcdc" stroke-width="2"/></svg>
      </div>
      <div class="panel-grip"><i class="grip grip-bottom"></i></div>
    </section>
  </div>
</div>
</body>
</html>
```
FILE: styles.css
```css
* { box-sizing: border-box; }
html, body { margin: 0; height: 100%; }
body {
  width: 3024px; height: 1772px; overflow: hidden;
  background: linear-gradient(90deg, #2c5a7e 0 22%, #6d5a2c 22% 80%, #1f4a78 80%) top / 100% 18px no-repeat, #000;
  font-family: "Noto Sans", "Open Sans", sans-serif;
  color: #dcdcdc;
  padding-top: 3px;
}
svg { display: block; flex: none; fill: #dcdcdc; }
.defs { position: absolute; }
i { display: block; font-style: normal; }

.window {
  position: relative; height: 1767px; display: flex; flex-direction: column;
  background: #3c3c3c; border-radius: 14px 14px 0 0; overflow: hidden;
}

/* title bar */
.titlebar {
  height: 45px; flex: none; background: #535353; border-bottom: 2px solid #3e3e3e;
  position: relative; display: flex; align-items: center; justify-content: center;
}
.lights { position: absolute; left: 18px; top: 9px; display: flex; gap: 16px; }
.light { width: 24px; height: 24px; border-radius: 50%; }
.red { background: radial-gradient(circle, #6e1208 0 4px, #ee6a5f 5px); }
.yellow { background: #f5be4f; }
.green { background: #61c554; }
.apptitle { font-size: 26px; color: #e8e8e8; letter-spacing: .1px; }

/* options bar */
.options {
  height: 68px; flex: none; background: #535353; border-bottom: 2px solid #3e3e3e;
  display: flex; align-items: center; font-size: 20px;
}
.opt-grip { width: 3px; height: 38px; margin-left: 12px; background: repeating-linear-gradient(180deg, #3e3e3e 0 2px, transparent 2px 4px); }
.opt-home { margin-left: 25px; }
.sep { width: 2px; height: 45px; background: #3e3e3e; flex: none; }
.sep-a { margin-left: 35px; }
.swatch-tool { margin-left: 13px; width: 32px !important; height: 26px !important; }
.chev-a { margin-left: 20px; }
.sep-b { margin-left: 17px; }
.select {
  height: 37px; display: flex; align-items: center; justify-content: space-between; flex: none;
  background: #454545; border: 2px solid #5f5f5f; border-radius: 5px; padding: 0 6px 0 14px;
}
.select-disabled { margin-left: 24px; width: 212px; color: #7f7f7f; background: #4e4e4e; border-color: #5c5c5c; }
.sep-c { margin-left: 18px; }
.picker { margin-left: 20px; width: 173px; height: 43px; display: flex; align-items: stretch; background: #454545; border: 2px solid #5f5f5f; border-radius: 5px; padding: 1px; flex: none; }
.picker-grad { width: 141px; background: linear-gradient(90deg, #142445, #557899); }
.picker-arrow { flex: 1; display: flex; align-items: center; justify-content: center; }
.sep-d { margin-left: 21px; }
.gt { display: block; flex: none; width: 27px; height: 28px; border: 2px solid #e2e2e2; }
.gt-linear { background: linear-gradient(90deg, #222, #ddd); }
.gt-radial { background: radial-gradient(circle, #fff, #111 85%); }
.gt-angle { background: conic-gradient(from 135deg, #fff, #111 25%, #666 60%, #fff); }
.gt-reflected { background: linear-gradient(180deg, #222, #fff, #222); }
.gt-diamond { background: linear-gradient(90deg, #111, #fff, #111), linear-gradient(180deg, #111, #fff, #111); background-blend-mode: multiply; }
.gt-first { margin-left: 32px; }
.gt-selected { margin-left: 13px; width: 51px; height: 53px; display: flex; align-items: center; justify-content: center; flex: none; background: #3a3a3a; border: 2px solid #5f5f5f; border-radius: 5px; }
.gt-third { margin-left: 13px; }
.gt-next { margin-left: 24px; }
.gt-diamond.gt-next { margin-left: 25px; }
.sep-e { margin-left: 33px; }
.check { display: flex; align-items: center; justify-content: center; flex: none; width: 20px; height: 20px; border-radius: 4px; border: 2px solid #6e6e6e; background: #4a4a4a; }
.check-on { background: #dcdcdc; border-color: #dcdcdc; }
.check-rev { margin-left: 20px; }
.optlabel { flex: none; color: #e0e0e0; font-size: 20.500px; }
.lbl-rev { margin-left: 17px; width: 76px; }
.check-dit { margin-left: 25px; }
.lbl-dit { margin-left: 17px; width: 59px; }
.sep-f { margin-left: 26px; }
.lbl-met { margin-left: 20px; width: 79px; color: #cdcdcd; font-size: 20px; }
.select-method { margin-left: 10px; width: 151px; padding: 0 6px 0 16px; color: #e4e4e4; }
.share { margin-left: auto; width: 106px; height: 48px; border: 0; border-radius: 24px; background: #326fdf; color: #fff; font: 600 20px "Noto Sans", sans-serif; padding: 0; }
.opt-search { margin-left: 25px; }
.opt-work { margin-left: 29px; }
.opt-chev { margin-left: 21px; margin-right: 11px; }

/* main row */
.work { flex: 1; min-height: 0; display: flex; position: relative; }

/* tools */
.toolbar { width: 82px; margin-left: 2px; flex: none; background: #535353; border-right: 5px solid #3e3e3e; position: relative; display: flex; flex-direction: column; align-items: center; }
.collapse-strip { height: 24px; width: 100%; flex: none; background: #424242; border-bottom: 2px solid #3a3a3a; display: flex; align-items: center; padding-left: 10px; }
.grip { height: 8px; width: 40px; flex: none; background: repeating-linear-gradient(90deg, #3e3e3e 0 2px, transparent 2px 4px); }
.grip-tools { margin-top: 6px; margin-right: 3px; }
.tools { margin-top: 18px; width: 100%; display: flex; flex-direction: column; }
.tool { position: relative; height: 52px; padding-right: 6px; display: flex; align-items: center; justify-content: center; flex: none; }
.tool svg { width: 48px; height: 48px; }
.tool.more::after { content: ""; position: absolute; right: 13px; bottom: 7px; width: 0; height: 0; border-left: 7px solid transparent; border-bottom: 7px solid #bcbcbc; }
.tool-active::before { content: ""; position: absolute; left: 5px; right: 5px; top: 1px; bottom: 1px; background: #3a3a3a; border: 2px solid #5f5f5f; border-radius: 5px; }
.tool-active svg { position: relative; }
.tool-t { font: 42px/48px "Liberation Serif", serif; color: #dcdcdc; }
.colors { position: relative; width: 100%; height: 102px; margin-top: 10px; flex: none; }
.color-default { position: absolute; left: 4px; top: 0; }
.color-swap { position: absolute; left: 44px; top: 0; }
.color-bg { position: absolute; left: 27px; top: 53px; width: 39px; height: 38px; background: #000; border: 2px solid #fff; outline: 2px solid #333; }
.color-fg { position: absolute; left: 6px; top: 32px; width: 39px; height: 39px; background: #6ecb63; border: 2px solid #fff; outline: 2px solid #333; }
.quickmask { margin-top: 10px; margin-right: 6px; }
.tool-screen { position: relative; margin-top: 28px; padding-right: 6px; width: 100%; display: flex; justify-content: center; }
.tool-screen::after { content: ""; position: absolute; right: 13px; bottom: -7px; width: 0; height: 0; border-left: 6px solid transparent; border-bottom: 6px solid #bcbcbc; }

/* document */
.doc { flex: 1; min-width: 0; display: flex; flex-direction: column; background: #282828; overflow: hidden; }
.tabs { height: 58px; flex: none; display: flex; background: #424242; border-bottom: 2px solid #3a3a3a; }
.tab { height: 56px; display: flex; align-items: center; font-size: 23.700px; flex: none; border-right: 2px solid #3a3a3a; }
.tab-x { font: 300 30px/1 "Noto Sans", sans-serif; width: 17px; }
.tab-active { width: 580px; background: #535353; padding-left: 14px; color: #ececec; font-weight: 600; }
.tab-active .tab-x { color: #bdbdbd; margin-right: 16px; font-weight: 400; }
.tab-idle { width: 502px; padding-left: 14px; color: #ababab; font-weight: 600; }
.tab-idle .tab-x { color: #bdbdbd; margin-right: 18px; font-weight: 400; }

.hruler-row { height: 38px; flex: none; display: flex; }
.ruler-corner { width: 38px; flex: none; background: #4a4a4a; position: relative; border-right: 1px solid #444;
  background-image: repeating-linear-gradient(90deg, #6c6c6c 0 1px, transparent 1px 3px), repeating-linear-gradient(180deg, #6c6c6c 0 1px, transparent 1px 3px);
  background-size: 100% 1px, 1px 100%; background-position: 0 26px, 26px 0; background-repeat: no-repeat; }
.hruler { flex: 1; display: flex; overflow: hidden; background: #454545; padding-left: 40px; font: 20px/1 "Open Sans", sans-serif; color: #9c9c9c; }
.hruler span { width: 100px; flex: none; height: 38px; padding: 13px 0 0 3px; position: relative;
  background-image:
    linear-gradient(#6f6f6f, #6f6f6f),
    linear-gradient(90deg, #6a6a6a 0 1px, transparent 1px),
    repeating-linear-gradient(90deg, #6a6a6a 0 1px, transparent 1px 10px);
  background-size: 1px 100%, 1px 8px, 100% 4px;
  background-position: 0 0, 50px 100%, 0 100%;
  background-repeat: no-repeat; }

.doc-body { flex: 1; min-height: 0; display: flex; }
.vruler { width: 38px; flex: none; background: #454545; overflow: hidden; padding-top: 34px; font: 20px/19.500px "Open Sans", sans-serif; color: #9c9c9c; }
.vruler div { height: 100px; padding: 2px 0 0 13px;
  background-image:
    linear-gradient(#6f6f6f, #6f6f6f),
    linear-gradient(#6a6a6a, #6a6a6a),
    repeating-linear-gradient(180deg, #6a6a6a 0 1px, transparent 1px 10px);
  background-size: 100% 1px, 9px 1px, 4px 100%;
  background-position: 0 0, 100% 50px, 100% 0;
  background-repeat: no-repeat; }
.vruler span { display: block; width: 12px; word-break: break-all; }

.pasteboard { flex: 1; position: relative; overflow: hidden; background: #282828; }
.artboard { position: absolute; left: 639px; top: 134px; width: 1000px; height: 1000px;
  background: radial-gradient(circle 1690px at 28px 50px, #142445, #557899); box-shadow: 0 2px 8px rgba(0,0,0,.45); }
.gizmo { position: absolute; left: 0; top: 0; }

.status { height: 34px; flex: none; display: flex; background: #484848; border-bottom: 2px solid #3a3a3a; font-size: 21px; }
.status-zoom { width: 120px; flex: none; background: #454545; padding-left: 33px; line-height: 30px; color: #e4e4e4; }
.status-info { width: 366px; flex: none; background: #535353; padding-left: 36px; display: flex; align-items: center; color: #cfcfcf; border-right: 2px solid #454545; }
.status-info span { width: 312px; }
.status-track { flex: 1; position: relative; padding: 6px 0 0 630px; background: #484848; }
.status-thumb { display: block; width: 1050px; height: 20px; background: #646464; }
.status-end { position: absolute; right: 2px; top: 14px; width: 32px; height: 16px; background: #4f4f4f; }

/* dock */
.dock { width: 74px; margin-left: 3px; margin-right: 2px; flex: none; display: flex; flex-direction: column; gap: 2px; background: #3e3e3e; }
.dock-strip { height: 22px; justify-content: flex-end; padding: 0 11px 0 0; border: 0; }
.dock-sec { height: 136px; flex: none; background: #535353; display: flex; flex-direction: column; align-items: center; padding-top: 6px; }
.dock-one { height: 80px; }
.dock-rest { flex: 1; }
.dock-icon { height: 56px; width: 100%; flex: none; display: flex; align-items: center; justify-content: center; position: relative; }
.grip + .dock-icon { margin-top: 3px; }
.dock-icon svg { width: 48px; height: 48px; position: relative; }
.dock-active::before { content: ""; position: absolute; left: 8px; right: 8px; top: 4px; bottom: 4px; background: #353535; border: 2px solid #5a5a5a; border-radius: 3px; }
.dock-text { color: #dcdcdc; }
.dock-a { font: 300 38px/1 "Noto Sans", sans-serif; }
.dock-caret { width: 2px; height: 30px; background: #dcdcdc; margin-left: 2px; }
.dock-p { font: 36px/1 "Liberation Sans", sans-serif; }

/* layers panel */
.panel { position: absolute; left: 2402px; top: 14px; width: 543px; height: 1622px; display: flex; flex-direction: column; background: #535353;
  border-top: 8px solid #3a3a3a; box-shadow: 0 2px 8px rgba(0,0,0,.4); z-index: 2; font-size: 20px; }
.panel-head { height: 55px; flex: none; display: flex; align-items: center; background: #424242; border-bottom: 2px solid #3a3a3a; }
.panel-tab { align-self: stretch; width: 106px; background: #535353; margin-bottom: -2px; padding: 13px 0 0 19px; font-weight: 600; color: #ececec; border-right: 2px solid #3a3a3a; }
.ph-more { margin-left: 358px; }
.ph-sep { width: 2px; height: 24px; background: #777; margin-left: 15px; }
.ph-menu { margin-left: 13px; }
.prow { flex: none; display: flex; align-items: center; border-bottom: 2px solid #434343; }
.filter-row { height: 65px; padding: 11px 0 0 7px; }
.select-kind { width: 175px; height: 36px; padding: 0 7px 0 15px; gap: 0; }
.select-kind span { margin: 0 auto 0 6px; }
.f-img { margin-left: 24px; }
.f-adj { margin-left: 26px; }
.f-t { margin-left: 27px; width: 22px; text-align: center; font: 30px/1 "Liberation Serif", serif; color: #dcdcdc; }
.f-shape { margin-left: 26px; }
.f-smart { margin-left: 29px; }
.f-toggle { margin-left: 24px; width: 18px; height: 36px; border: 2px solid #666; border-radius: 9px; background: #454545; position: relative; }
.f-toggle i { position: absolute; left: -1px; top: -2px; width: 16px; height: 16px; border-radius: 50%; background: #e4e4e4; }
.blend-row { height: 56px; padding: 0 0 0 7px; }
.select-blend { width: 261px; height: 36px; padding: 0 7px 0 13px; color: #e4e4e4; }
.plabel { flex: none; color: #cdcdcd; }
.p-opacity { margin-left: 8px; width: 84px; }
.pct { width: 103px; height: 35px; flex: none; display: flex; background: #454545; border: 2px solid #5f5f5f; border-radius: 5px; color: #e4e4e4; line-height: 30px; }
.pct span { width: 72px; padding-left: 6px; }
.pct b { flex: 1; display: flex; align-items: center; justify-content: center; background: #4a4a4a; border-left: 2px solid #5f5f5f; border-radius: 0 5px 5px 0; }
.lock-row { height: 59px; padding: 0 0 6px 9px; border-bottom: 0; }
.p-lock { width: 56px; }
.l-check { margin-left: 10px; }
.l-brush { margin-left: 21px; }
.l-move { margin-left: 17px; }
.l-art { margin-left: 19px; }
.l-lock { margin-left: 20px; }
.p-fill { margin-left: 50px; width: 37px; }

.panel-main { flex: 1; min-height: 0; display: flex; background: #484848; }
.layers { width: 513px; flex: none; background: #4c4c4c; }
.panel-scroll { flex: 1; background: #484848; }
.layer { display: flex; background: #535353; border-bottom: 2px solid #404040; }
.layer-last { border-bottom: 3px solid #474747; }
.eye-col { width: 61px; flex: none; border-right: 2px solid #434343; display: flex; align-items: center; padding-left: 18px; }
.eye-col-group { align-items: flex-start; padding-top: 32px; }
.layer-content { flex: 1; min-width: 0; }
.layer-head { height: 81px; display: flex; align-items: center; padding-left: 7px; position: relative; }
.layer-head-sel { height: 82px; background: #696969; padding-left: 4px; }
.thumb { display: block; width: 64px; height: 64px; flex: none; border: 2px solid #2a2a2a; }
.thumb-mask { background: #fff; margin-left: 8px; }
.thumb-check { background: repeating-conic-gradient(#c8c8c8 0 25%, #fff 0 50%) 0 0 / 12px 12px; }
.thumb-black { background: #000; }
.chain { margin-left: 4px; }
.lname { margin-left: 16px; color: #e0e0e0; }
.lname-sel { color: #e8e8e8; }
.fx { margin-left: auto; font: italic 300 25px/1 "Open Sans", sans-serif; color: #dcdcdc; margin-right: 9px; }
.collapse { align-self: stretch; width: 23px; flex: none; background: #474747; display: flex; align-items: center; justify-content: center; }
.fx-list { margin-top: -4px; padding-bottom: 3px; }
.fx-row { height: 38px; display: flex; align-items: center; color: #dcdcdc; }
.fx-row .eye { margin-top: 6px; margin-right: 9px; }
.fx-group { padding-left: 39px; }
.fx-item { padding-left: 74px; }

.panel-foot { height: 50px; flex: none; border-top: 2px solid #404040; display: flex; align-items: center; padding-left: 137px; }
.pf-fx { margin-left: 30px; width: 24px; font: italic 300 25px/1 "Open Sans", sans-serif; color: #dcdcdc; position: relative; }
.pf-fx::after { content: ""; position: absolute; left: 20px; bottom: -6px; border-left: 4px solid transparent; border-right: 4px solid transparent; border-top: 5px solid #eee; }
.pf-mask { margin-left: 28px; }
.pf-adj { margin-left: 31px; }
.pf-folder { margin-left: 30px; }
.pf-new { margin-left: 31px; }
.pf-trash { margin-left: 32px; }
.panel-grip { height: 16px; flex: none; border-top: 3px solid #3c3c3c; display: flex; justify-content: center; }
.grip-bottom { margin-top: 1px; height: 12px; }
```
